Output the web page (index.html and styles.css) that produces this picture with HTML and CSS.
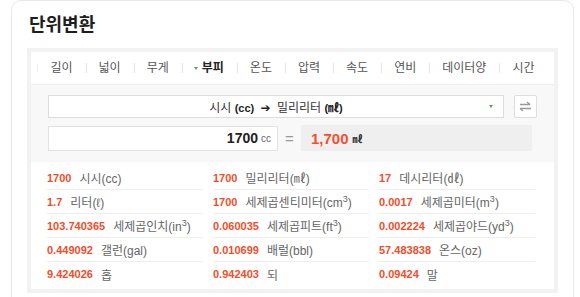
FILE: index.html
```html
<!DOCTYPE html>
<html lang="ko">
<head>
  <meta charset="UTF-8" />
  <meta name="viewport" content="width=device-width, initial-scale=1.0" />
  <title>단위변환</title>
  <link rel="stylesheet" href="styles.css">
</head>
<body>
  <div class="card">
    <h2 class="title">단위변환</h2>
    <div class="converter">
      <ul class="tabs">
        <li>길이</li>
        <li>넓이</li>
        <li>무게</li>
        <li class="active">부피</li>
        <li>온도</li>
        <li>압력</li>
        <li>속도</li>
        <li>연비</li>
        <li>데이터양</li>
        <li>시간</li>
      </ul>

      <div class="controls">
        <div class="select-row">
          <div class="select">
            <span>시시 <b>(cc)</b> <b class="arrow">➔</b> 밀리리터 <b>(㎖)</b></span>
            <i class="caret"></i>
          </div>
          <button class="swap" type="button">
            <svg width="13" height="11" viewBox="0 0 13 11">
              <path d="M1 3.5h10M8 1l3 2.5M1 7.5h11M1 7.5l3 2.5" fill="none" stroke="#9a9a9a" stroke-width="1.4"/>
            </svg>
          </button>
        </div>
        <div class="value-row">
          <div class="input"><b>1700</b><span class="unit">cc</span></div>
          <div class="equals">=</div>
          <div class="result"><b>1,700</b><span class="unit">㎖</span></div>
        </div>
      </div>

      <div class="results">
        <div class="cell"><b>1700</b><span>시시(cc)</span></div>
        <div class="cell"><b>1700</b><span>밀리리터(㎖)</span></div>
        <div class="cell"><b>17</b><span>데시리터(㎗)</span></div>
        <div class="cell"><b>1.7</b><span>리터(ℓ)</span></div>
        <div class="cell"><b>1700</b><span>세제곱센티미터(cm<sup>3</sup>)</span></div>
        <div class="cell"><b>0.0017</b><span>세제곱미터(m<sup>3</sup>)</span></div>
        <div class="cell"><b>103.740365</b><span>세제곱인치(in<sup>3</sup>)</span></div>
        <div class="cell"><b>0.060035</b><span>세제곱피트(ft<sup>3</sup>)</span></div>
        <div class="cell"><b>0.002224</b><span>세제곱야드(yd<sup>3</sup>)</span></div>
        <div class="cell"><b>0.449092</b><span>갤런(gal)</span></div>
        <div class="cell"><b>0.010699</b><span>배럴(bbl)</span></div>
        <div class="cell"><b>57.483838</b><span>온스(oz)</span></div>
        <div class="cell last"><b>9.424026</b><span>홉</span></div>
        <div class="cell last"><b>0.942403</b><span>되</span></div>
        <div class="cell last"><b>0.09424</b><span>말</span></div>
      </div>
    </div>
  </div>
</body>
</html>
```

FILE: styles.css
```css
* {
  margin: 0;
  padding: 0;
  box-sizing: border-box;
}
body {
  font-family: "Liberation Sans", "Noto Sans CJK KR", sans-serif;
  background: #fff;
  color: #333;
}
.card {
  margin-left: 11px;
  width: 563px;
  min-height: 320px;
  border: 1px solid #e8e8e8;
  border-radius: 10px;
  padding: 12px 15px 0;
}
.title {
  font-size: 18px;
  font-weight: bold;
  color: #1e1e1e;
  line-height: 24px;
  padding-left: 2px;
}
.converter {
  margin-top: 11px;
  background: #f8f8f8;
  border: 4px solid #f2f2f2;
}
.tabs {
  list-style: none;
  background: #fff;
  height: 33px;
  border-bottom: 1px solid #eee;
  display: flex;
  justify-content: center;
  align-items: center;
}
.tabs li {
  position: relative;
  flex-shrink: 0;
  white-space: nowrap;
  font-size: 12px;
  color: #555;
  padding: 0 13px;
  line-height: 16px;
}
.tabs li::before {
  content: "";
  position: absolute;
  left: 0;
  top: 3px;
  height: 10px;
  border-left: 1px solid #e6e6e6;
}
.tabs li:first-child::before {
  border-color: #f2f2f2;
}
.tabs li.active {
  color: #222;
  font-weight: bold;
  padding-left: 20px;
}
.tabs li.active::after {
  content: "";
  position: absolute;
  left: 12px;
  top: 7px;
  border-left: 2px solid transparent;
  border-right: 2px solid transparent;
  border-top: 3px solid #4cae4c;
}
.controls {
  padding: 10px 17px 11px;
}
.select-row {
  display: flex;
  gap: 10px;
}
.select {
  position: relative;
  flex: 1;
  height: 23px;
  background: #fff;
  border: 1px solid #ddd;
  display: flex;
  align-items: center;
  justify-content: center;
  font-size: 12px;
  color: #333;
}
.select b {
  font-size: 11px;
  color: #222;
}
.select .arrow {
  font-family: "DejaVu Sans", sans-serif;
  font-size: 12px;
  margin: 0 3px;
}
.caret {
  position: absolute;
  right: 10px;
  top: 9px;
  border-left: 2.5px solid transparent;
  border-right: 2.5px solid transparent;
  border-top: 3px solid #4cae4c;
}
.swap {
  width: 23px;
  height: 23px;
  background: #fff;
  border: 1px solid #ddd;
  border-radius: 2px;
  display: flex;
  align-items: center;
  justify-content: center;
}
.value-row {
  display: flex;
  align-items: center;
  margin-top: 7px;
  margin-right: 5px;
}
.input {
  width: 230px;
  height: 25px;
  background: #fff;
  border: 1px solid #e2e2e2;
  display: flex;
  align-items: center;
  justify-content: flex-end;
  padding-right: 6px;
}
.input b {
  font-size: 14px;
  color: #222;
}
.input .unit {
  font-size: 10px;
  color: #666;
  margin-left: 3px;
}
.equals {
  width: 23px;
  text-align: center;
  font-size: 15px;
  color: #999;
}
.result {
  flex: 1;
  height: 26px;
  background: #efefef;
  display: flex;
  align-items: center;
  padding-left: 10px;
}
.result b {
  font-size: 15px;
  color: #f5502e;
}
.result .unit {
  font-size: 10px;
  font-weight: bold;
  color: #333;
  margin-left: 4px;
}
.results {
  background: #fff;
  padding: 4px 17px 3px 16px;
  display: grid;
  grid-template-columns: repeat(3, 156px);
  column-gap: 10px;
}
.cell {
  height: 24px;
  border-bottom: 1px solid #eee;
  display: flex;
  align-items: center;
}
.cell.last {
  border-bottom: none;
}
.cell b {
  font-size: 11px;
  color: #f24d2a;
  margin-right: 8px;
}
.cell span {
  font-size: 12px;
  color: #666;
}
.cell sup {
  font-size: 9px;
  line-height: 0;
}
```
